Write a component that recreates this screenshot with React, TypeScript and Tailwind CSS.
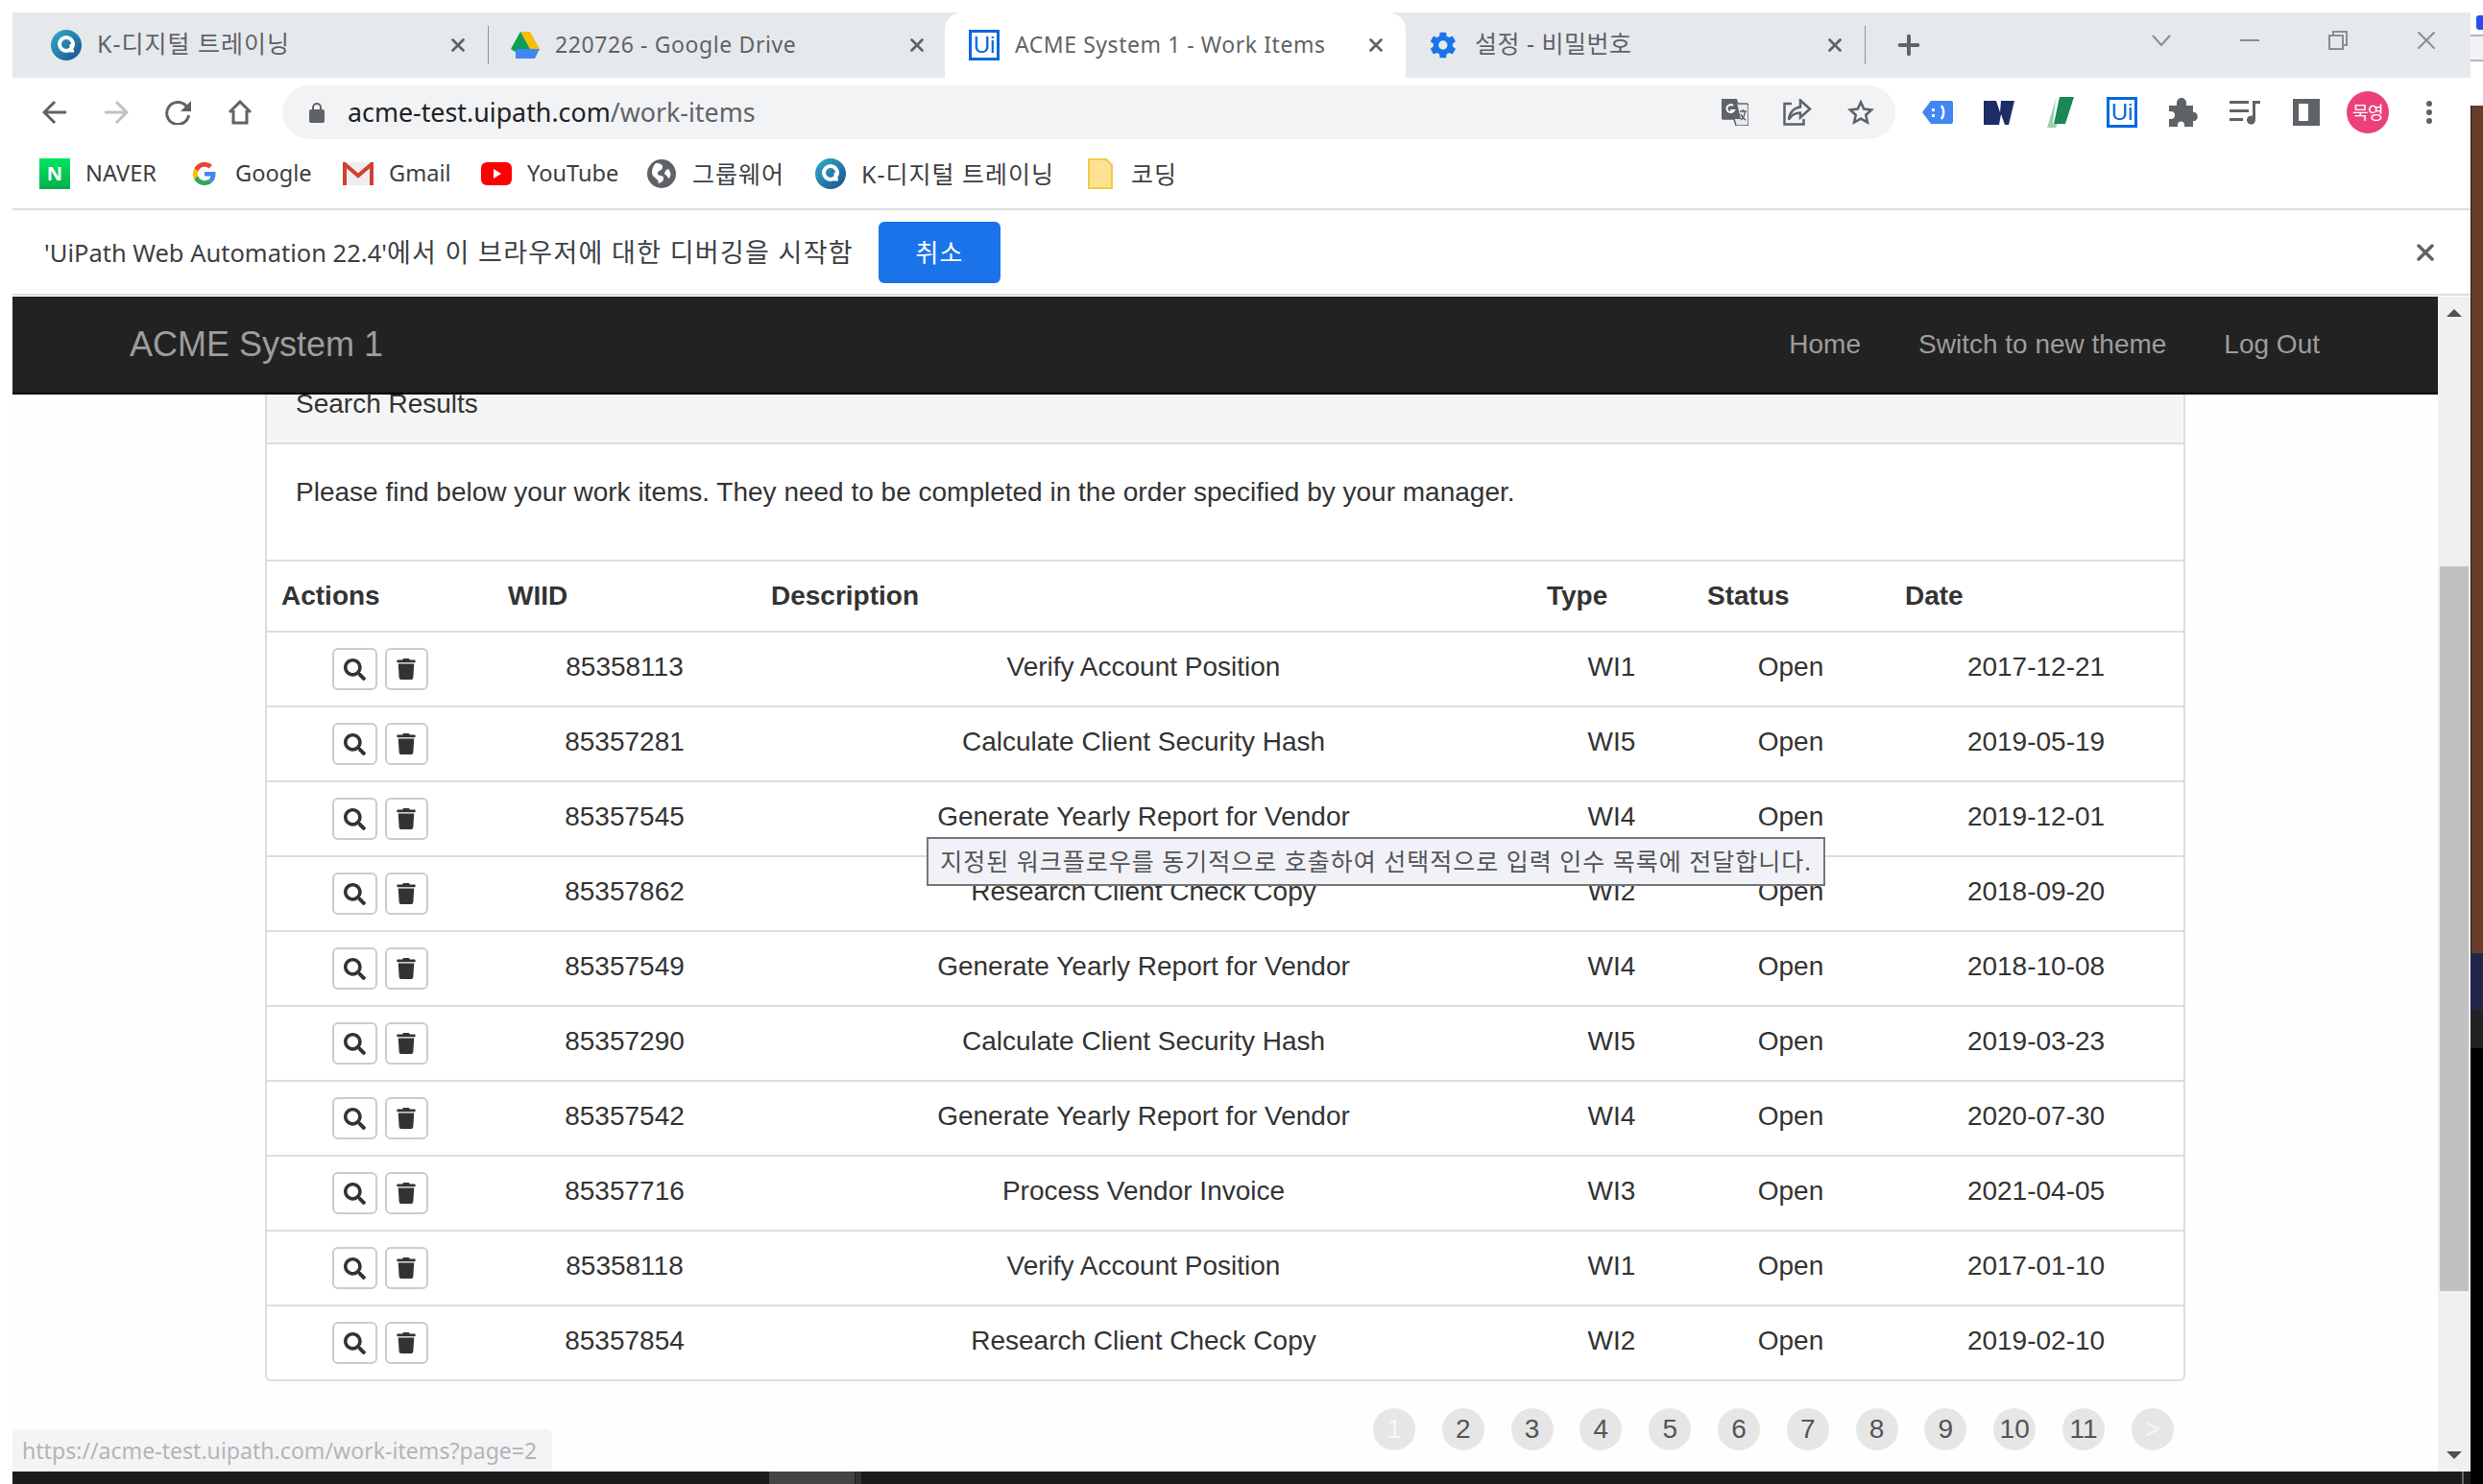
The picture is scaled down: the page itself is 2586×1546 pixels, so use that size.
import { FaSearch, FaTrash } from "react-icons/fa";
import { X, Plus } from "lucide-react";
import type { ReactNode } from "react";

const uiFont = "font-['Noto_Sans','Noto_Sans_CJK_KR',sans-serif]";

const rows = [
    ["85358113", "Verify Account Position", "WI1", "2017-12-21"],
    ["85357281", "Calculate Client Security Hash", "WI5", "2019-05-19"],
    ["85357545", "Generate Yearly Report for Vendor", "WI4", "2019-12-01"],
    ["85357862", "Research Client Check Copy", "WI2", "2018-09-20"],
    ["85357549", "Generate Yearly Report for Vendor", "WI4", "2018-10-08"],
    ["85357290", "Calculate Client Security Hash", "WI5", "2019-03-23"],
    ["85357542", "Generate Yearly Report for Vendor", "WI4", "2020-07-30"],
    ["85357716", "Process Vendor Invoice", "WI3", "2021-04-05"],
    ["85358118", "Verify Account Position", "WI1", "2017-01-10"],
    ["85357854", "Research Client Check Copy", "WI2", "2019-02-10"],
];

const gridCols = "grid grid-cols-[237px_274px_808px_167px_206px_305px]";

function AcademyIcon({ size = 32 }: { size?: number }) {
    return (
        <svg width={size} height={size} viewBox="0 0 32 32" className="shrink-0">
            <defs>
                <linearGradient id="acad" x1="0" y1="0" x2="1" y2="1">
                    <stop offset="0" stopColor="#2fb0c6" />
                    <stop offset="1" stopColor="#1a4f8f" />
                </linearGradient>
            </defs>
            <circle cx="16" cy="16" r="16" fill="url(#acad)" />
            <circle cx="16" cy="15" r="7" fill="none" stroke="#fff" strokeWidth="4" />
            <path d="M21 15v7h3" fill="none" stroke="#fff" strokeWidth="3" />
        </svg>
    );
}

function DriveIcon() {
    return (
        <svg width="30" height="28" viewBox="0 0 30 28" className="shrink-0">
            <path d="M10 0h10l10 18H20z" fill="#fbbc04" />
            <path d="M10 0l10 18-5 10L0 18z" fill="#0f9d58" />
            <path d="M5 18h25l-5 10H5z" fill="#4285f4" />
        </svg>
    );
}

function UiIcon({ size = 32 }: { size?: number }) {
    return (
        <div
            className="flex shrink-0 items-center justify-center border-[3px] border-[#0067df] bg-white font-['Liberation_Sans',sans-serif] text-[24px] font-normal leading-none text-[#0067df]"
            style={{ width: size, height: size }}
        >
            Ui
        </div>
    );
}

function GearIcon() {
    return (
        <svg width="26" height="28" viewBox="2.2 1.8 19.6 20.4" className="shrink-0" fill="#1a73e8">
            <path d="M19.4 13c.04-.33.06-.66.06-1s-.02-.67-.07-1l2.1-1.65a.5.5 0 0 0 .12-.64l-2-3.46a.5.5 0 0 0-.61-.22l-2.49 1a7.3 7.3 0 0 0-1.73-1l-.38-2.65A.5.5 0 0 0 13.9 2h-4a.5.5 0 0 0-.49.42L9.03 5.07a7.7 7.7 0 0 0-1.73 1l-2.49-1a.5.5 0 0 0-.61.22l-2 3.46a.5.5 0 0 0 .12.64L4.43 11c-.05.33-.08.67-.08 1s.03.67.07 1l-2.1 1.65a.5.5 0 0 0-.12.64l2 3.46c.13.22.39.3.61.22l2.49-1c.52.4 1.09.74 1.73 1l.38 2.65c.04.24.25.42.49.42h4c.24 0 .45-.18.49-.42l.38-2.65a7.7 7.7 0 0 0 1.73-1l2.49 1c.22.08.48 0 .61-.22l2-3.46a.5.5 0 0 0-.12-.64zM11.9 15.5a3.5 3.5 0 1 1 0-7 3.5 3.5 0 0 1 0 7z" />
        </svg>
    );
}

function Tab({
    icon,
    label,
    labelClass,
    width,
    pl,
    pr,
    active,
}: {
    icon: ReactNode;
    label: string;
    labelClass: string;
    width: string;
    pl: string;
    pr: string;
    active?: boolean;
}) {
    return (
        <div
            className={`flex h-full items-center justify-between ${width} ${pl} ${pr} ${active ? "rounded-t-[18px] bg-white" : ""}`}
        >
            <div className="flex items-center gap-[16px] whitespace-nowrap text-[#5f6368]">
                {icon}
                <span className={`-translate-y-[1px] ${labelClass}`}>{label}</span>
            </div>
            <X size={22} strokeWidth={3} className="text-[#5f6368]" />
        </div>
    );
}

function IconCell({ children }: { children: ReactNode }) {
    return <div className="flex h-full w-[64px] items-center justify-center">{children}</div>;
}

function Bookmark({ icon, label, width, korean }: { icon: ReactNode; label: string; width: string; korean?: boolean }) {
    return (
        <div className={`flex items-center gap-[16px] ${width}`}>
            <div className="flex w-[32px] shrink-0 justify-center">{icon}</div>
            <span className={`whitespace-nowrap leading-none text-[#3c4043] ${korean ? "text-[25px] tracking-[1px]" : "text-[23.600px]"}`}>
                {label}
            </span>
        </div>
    );
}

function TableRow({ row }: { row: string[] }) {
    return (
        <div className={`${gridCols} h-[78px] items-center border-t-2 border-[#ddd] text-center text-[#333]`}>
            <div className="flex justify-center gap-[8px] pl-[2px]">
                <div className="flex h-[44px] w-[47px] items-center justify-center rounded-[6px] border-2 border-[#ccc] bg-white">
                    <FaSearch size={23} className="text-[#333]" />
                </div>
                <div className="flex h-[44px] w-[45px] items-center justify-center rounded-[6px] border-2 border-[#ccc] bg-white">
                    <FaTrash size={22} className="text-[#333]" />
                </div>
            </div>
            <div className="pb-[4px] pl-[1px]">{row[0]}</div>
            <div className="pb-[4px]">{row[1]}</div>
            <div className="pb-[4px]">{row[2]}</div>
            <div className="pb-[4px]">Open</div>
            <div className="pb-[4px]">{row[3]}</div>
        </div>
    );
}

export default function App() {
    return (
        <div className={`flex h-[1546px] w-[2586px] overflow-hidden bg-white ${uiFont}`}>
            <div className="w-[13px] shrink-0" />

            <div className="flex w-[2560px] shrink-0 flex-col">
                <div className="h-[13px] shrink-0" />

                {/* Tab strip */}
                <div className="flex h-[68px] shrink-0 items-center bg-[#e6e9ec]">
                    <Tab icon={<AcademyIcon />} label="K-디지털 트레이닝" labelClass="text-[25px] tracking-[1px]" width="w-[495px]" pl="pl-[40px]" pr="pr-[20px]" />
                    <div className="h-[40px] w-px bg-[#8e9297]" />
                    <Tab icon={<DriveIcon />} label="220726 - Google Drive" labelClass="text-[23px] tracking-[0.6px]" width="w-[475px]" pl="pl-[23px]" pr="pr-[18px]" />
                    <Tab icon={<UiIcon />} label="ACME System 1 - Work Items" labelClass="text-[23px] tracking-[0.55px]" width="w-[480px]" pl="pl-[25px]" pr="pr-[20px]" active />
                    <Tab icon={<GearIcon />} label="설정 - 비밀번호" labelClass="ml-[4px] text-[25px] tracking-[0.5px]" width="w-[478px]" pl="pl-[26px]" pr="pr-[20px]" />
                    <div className="h-[40px] w-px bg-[#8e9297]" />
                    <div className="flex w-[90px] justify-center">
                        <Plus size={32} strokeWidth={3} className="text-[#5f6368]" />
                    </div>
                    <div className="ml-auto flex h-full items-start">
                        <div className="flex h-[58px] w-[92px] items-center justify-center">
                            <svg width="22" height="14" viewBox="0 0 22 14">
                                <path d="M2 2l9 10 9-10" fill="none" stroke="#8a8d91" strokeWidth="2" />
                            </svg>
                        </div>
                        <div className="flex h-[58px] w-[92px] items-center justify-center">
                            <div className="h-[2px] w-[20px] bg-[#8a8d91]" />
                        </div>
                        <div className="flex h-[58px] w-[92px] items-center justify-center">
                            <svg width="20" height="20" viewBox="0 0 20 20" fill="none" stroke="#8a8d91" strokeWidth="2">
                                <rect x="1" y="5" width="14" height="14" />
                                <path d="M5 5V1h14v14h-4" />
                            </svg>
                        </div>
                        <div className="flex h-[58px] w-[92px] items-center justify-center">
                            <X size={32} strokeWidth={1.5} className="text-[#8a8d91]" />
                        </div>
                    </div>
                </div>

                {/* Toolbar */}
                <div className="flex h-[79px] shrink-0 items-center pb-[7px]">
                    <div className="flex items-center gap-[38px] pl-[31px]">
                        <svg width="26" height="26" viewBox="0 0 26 26" fill="none" stroke="#5f6368" strokeWidth="3">
                            <path d="M25 13H3M13 2L2 13l11 11" />
                        </svg>
                        <svg width="26" height="26" viewBox="0 0 26 26" fill="none" stroke="#bdc1c6" strokeWidth="3">
                            <path d="M1 13h22M13 2l11 11-11 11" />
                        </svg>
                        <svg width="27" height="26" viewBox="0 0 27 26" fill="none">
                            <path d="M22 6.5A11.5 11.5 0 1 0 24.6 16" stroke="#5f6368" strokeWidth="3" />
                            <path d="M27 1v11H16z" fill="#5f6368" />
                        </svg>
                        <svg width="26" height="26" viewBox="0 0 26 26" fill="none" stroke="#5f6368" strokeWidth="3">
                            <path d="M2 13L13 2l11 11M6 11v13h14V11" />
                        </svg>
                    </div>
                    <div className="ml-[31px] flex h-[56px] w-[1680px] items-center rounded-full bg-[#f1f3f4] pl-[28px] pr-[21px]">
                        <svg width="16" height="21" viewBox="0 0 16 21" className="shrink-0">
                            <path d="M4 8V5a4 4 0 0 1 8 0v3" fill="none" stroke="#5f6368" strokeWidth="2" />
                            <rect y="7" width="16" height="14" rx="2" fill="#5f6368" />
                        </svg>
                        <div className="ml-[24px] whitespace-nowrap text-[26.8px] leading-none text-[#202124]">
                            acme-test.uipath.com<span className="text-[#5f6368]">/work-items</span>
                        </div>
                        <div className="ml-auto flex items-center gap-[36px]">
                            <svg width="28" height="28" viewBox="0 0 28 28">
                                <path d="M2 0h13l2 5h9a2 2 0 0 1 2 2v19a2 2 0 0 1-2 2H15l-2-7H2a2 2 0 0 1-2-2V2a2 2 0 0 1 2-2z" fill="#e8eaed" stroke="#5f6368" strokeWidth="1.5" />
                                <path d="M2 0h13l5 21H2a2 2 0 0 1-2-2V2a2 2 0 0 1 2-2z" fill="#5f6368" />
                                <path d="M12 7a4 4 0 1 0 1 5h-4" fill="none" stroke="#fff" strokeWidth="2" />
                                <path d="M19 13h7M22.500 11v2M20 22c3-2 4-5 4.500-9M20 16c1 3 3 5 5 6" fill="none" stroke="#5f6368" strokeWidth="1.500" />
                            </svg>
                            <svg width="30" height="28" viewBox="0 0 30 28" fill="none" stroke="#5f6368" strokeWidth="2.500">
                                <path d="M9 5H1.500v21.500h20V21" />
                                <path d="M18 1.500l10 9-10 9v-5c-5 0-9 2-12 7 .5-7 5-12 12-13z" />
                            </svg>
                            <svg width="30" height="28" viewBox="0 0 24 24" fill="none" stroke="#5f6368" strokeWidth="2.200">
                                <path d="M12 3l2.800 6.100 6.700.8-5 4.500 1.400 6.600L12 17.600 6.100 21l1.400-6.600-5-4.500 6.700-.8z" />
                            </svg>
                        </div>
                    </div>
                    <div className="ml-[12px] flex h-full items-center">
                        <IconCell>
                            <svg width="32" height="24" viewBox="0 0 32 24">
                                <path d="M9 0h21a2 2 0 0 1 2 2v20a2 2 0 0 1-2 2H9L0 12z" fill="#4285f4" />
                                <rect x="10" y="8" width="3" height="3" fill="#fff" />
                                <rect x="10" y="14" width="3" height="3" fill="#fff" />
                                <path d="M20 5c3 4 3 10 0 14" fill="none" stroke="#fff" strokeWidth="2.500" />
                            </svg>
                        </IconCell>
                        <IconCell>
                            <svg width="32" height="25" viewBox="0 0 32 25">
                                <path d="M0 0h32l-6 25H0z" fill="#1f2d66" />
                                <path d="M13 0h5l-1 12zM16 25l2-11 4 11z" fill="#fff" />
                            </svg>
                        </IconCell>
                        <IconCell>
                            <svg width="28" height="32" viewBox="0 0 28 32">
                                <path d="M13 0h15l-9 28H7z" fill="#1a8754" />
                                <path d="M9 2L0 32h9l2-4H6z" fill="#9bd0b4" />
                            </svg>
                        </IconCell>
                        <IconCell>
                            <UiIcon />
                        </IconCell>
                        <IconCell>
                            <svg width="30" height="30" viewBox="0 0 30 30">
                                <path d="M0 8h8V5a5 5 0 0 1 10 0v3h7v7h2a5 5 0 0 1 0 9h-2v6H16v-2a3 3 0 0 0-7 0v2H0v-8h2a4 4 0 0 0 0-8H0z" fill="#5f6368" />
                            </svg>
                        </IconCell>
                        <IconCell>
                            <svg width="32" height="26" viewBox="0 0 32 26" fill="#5f6368">
                                <rect y="1" width="20" height="3" />
                                <rect y="10" width="20" height="3" />
                                <rect y="19" width="14" height="3" />
                                <path d="M24 1h8v3h-5v17a4.500 4.500 0 1 1-3-4.200z" />
                            </svg>
                        </IconCell>
                        <IconCell>
                            <svg width="28" height="28" viewBox="0 0 28 28">
                                <path d="M0 0h28v28H0zM6 5v18h10V5z" fill="#5f6368" fillRule="evenodd" />
                            </svg>
                        </IconCell>
                        <IconCell>
                            <div className="flex h-[44px] w-[44px] items-center justify-center rounded-full bg-[#ec407a] text-[18px] leading-none tracking-[-0.5px] text-white">
                                묵영
                            </div>
                        </IconCell>
                        <IconCell>
                            <svg width="6" height="24" viewBox="0 0 6 24" fill="#5f6368">
                                <circle cx="3" cy="3" r="3" />
                                <circle cx="3" cy="12" r="3" />
                                <circle cx="3" cy="21" r="3" />
                            </svg>
                        </IconCell>
                    </div>
                </div>

                {/* Bookmarks */}
                <div className="flex h-[57px] shrink-0 items-center pb-[15px] pl-[28px]">
                    <Bookmark
                        width="w-[156px]"
                        label="NAVER"
                        icon={
                            <div className="flex h-[32px] w-[32px] items-center justify-center bg-gradient-to-b from-[#03e561] to-[#03b04c] text-[20px] font-bold leading-none text-white">
                                N
                            </div>
                        }
                    />
                    <Bookmark
                        width="w-[160px]"
                        label="Google"
                        icon={
                            <svg width="24" height="24" viewBox="0 0 48 48">
                                <path fill="#EA4335" d="M24 9.500c3.500 0 6.700 1.200 9.200 3.600l6.900-6.900C35.900 2.400 30.500 0 24 0 14.600 0 6.500 5.400 2.600 13.200l8 6.200C12.400 13.700 17.700 9.500 24 9.500z" />
                                <path fill="#4285F4" d="M47 24.500c0-1.600-.1-3.100-.4-4.500H24v9h13c-.6 3-2.300 5.500-4.800 7.200l7.700 6C44.400 38 47 31.800 47 24.500z" />
                                <path fill="#FBBC05" d="M10.500 28.600c-.5-1.400-.8-3-.8-4.600s.3-3.200.8-4.600l-8-6.200C.9 16.500 0 20.100 0 24s.9 7.500 2.600 10.800z" />
                                <path fill="#34A853" d="M24 48c6.500 0 11.900-2.100 15.900-5.800l-7.700-6c-2.200 1.500-4.900 2.300-8.200 2.300-6.300 0-11.600-4.200-13.500-9.900l-8 6.200C6.500 42.600 14.600 48 24 48z" />
                            </svg>
                        }
                    />
                    <Bookmark
                        width="w-[144px]"
                        label="Gmail"
                        icon={
                            <svg width="32" height="24" viewBox="0 0 32 24">
                                <rect width="32" height="24" fill="#eeeeee" />
                                <path d="M2 24V2l14 12L30 2v22" fill="none" stroke="#d23f31" strokeWidth="4" />
                            </svg>
                        }
                    />
                    <Bookmark
                        width="w-[172px]"
                        label="YouTube"
                        icon={
                            <svg width="32" height="24" viewBox="0 0 32 24">
                                <rect width="32" height="24" rx="6" fill="#ff0000" />
                                <path d="M13 7l8 5-8 5z" fill="#fff" />
                            </svg>
                        }
                    />
                    <Bookmark
                        width="w-[176px]"
                        label="그룹웨어"
                        korean
                        icon={
                            <svg width="30" height="30" viewBox="0 0 30 30">
                                <circle cx="15" cy="15" r="15" fill="#5f6368" />
                                <path d="M9 4c5 0 8 2 7 5s-6 3-5 6 5 1 6 4-3 6-6 6c3-3-3-5-5-8s-1-9 3-13zM22 10c3 3 3 7 1 10-2-1-2-3-4-4s0-5 3-6z" fill="#fff" />
                            </svg>
                        }
                    />
                    <Bookmark width="w-[281px]" label="K-디지털 트레이닝" korean icon={<AcademyIcon />} />
                    <Bookmark
                        width="w-[120px]"
                        label="코딩"
                        korean
                        icon={
                            <svg width="26" height="32" viewBox="0 0 26 32">
                                <path d="M1 1h18l6 6v24H1z" fill="#fde293" stroke="#f2c94c" strokeWidth="2" />
                            </svg>
                        }
                    />
                </div>
                <div className="h-[2px] shrink-0 bg-[#dcdcdc]" />

                {/* Debugger info bar */}
                <div className="flex h-[87px] shrink-0 items-center pl-[33px] pr-[33px]">
                    <span className="whitespace-nowrap text-[25.5px] leading-none text-[#3c4043]">
                        'UiPath Web Automation 22.4'
                        <span className="text-[27px] tracking-[1.3px]">에서 이 브라우저에 대한 디버깅을 시작함</span>
                    </span>
                    <div className="ml-[26px] flex h-[64px] w-[127px] items-center justify-center rounded-[6px] bg-[#1a73e8] text-[26px] leading-none tracking-[1px] text-white">
                        취소
                    </div>
                    <X size={28} strokeWidth={3} className="ml-auto text-[#5f6368]" />
                </div>
                <div className="h-[2px] shrink-0 bg-[#dcdcdc]" />
                <div className="h-px shrink-0" />

                {/* Page viewport */}
                <div className="flex min-h-0 flex-1">
                    <div className="relative w-[2526px] shrink-0 overflow-hidden bg-[#fefefe] font-['Liberation_Sans',sans-serif] text-[28px] text-[#333]">
                        <div className="flex h-[102px] items-center border-b-2 border-black bg-[#222] pl-[122px] pr-[123px] text-[#9d9d9d]">
                            <span className="text-[36px] leading-none">ACME System 1</span>
                            <div className="ml-auto flex gap-[60px] leading-none">
                                <span>Home</span>
                                <span>Switch to new theme</span>
                                <span>Log Out</span>
                            </div>
                        </div>

                        <div className="ml-[263px] w-[2000px] rounded-b-[6px] border-x-2 border-b-2 border-[#ddd] bg-white">
                            <div className="h-[52px] border-b-2 border-[#ddd] bg-[#f5f5f5] pl-[30px] leading-[20px]">
                                Search Results
                            </div>
                            <div className="h-[120px] pl-[30px] pt-[32px] leading-[36px]">
                                Please find below your work items. They need to be completed in the order specified by your manager.
                            </div>
                            <div className={`${gridCols} -mx-[2px] h-[74px] items-center border-t-2 border-[#ddd] font-bold`}>
                                <div className="pl-[17px]">Actions</div>
                                <div className="pl-[16px]">WIID</div>
                                <div className="pl-[16px]">Description</div>
                                <div className="pl-[16px]">Type</div>
                                <div className="pl-[16px]">Status</div>
                                <div className="pl-[16px]">Date</div>
                            </div>
                            <div className="-mx-[2px]">
                                {rows.map((row) => (
                                    <TableRow key={row[0]} row={row} />
                                ))}
                            </div>
                        </div>

                        {/* Pagination */}
                        <div className="ml-[1417px] mt-[28px] flex gap-[27.8px]">
                            {["1", "2", "3", "4", "5", "6", "7", "8", "9", "10", "11", ">"].map((page, i) => (
                                <div
                                    key={page}
                                    className={`flex h-[44px] w-[44px] items-center justify-center rounded-full bg-[#e6e6e6] leading-none ${i === 0 || i === 11 ? "text-[#f7f7f7]" : "text-[#555]"}`}
                                >
                                    {page}
                                </div>
                            ))}
                        </div>

                        {/* Link status bubble */}
                        <div className={`absolute bottom-0 left-0 flex h-[44px] w-[562px] items-center rounded-tr-[6px] bg-[#f3f4f6] pl-[10px] text-[23.1px] text-[#b5b5b5] ${uiFont}`}>
                            https://acme-test.uipath.com/work-items?page=2
                        </div>

                        {/* Hover tooltip */}
                        <div className={`absolute left-[952px] top-[563px] flex h-[51px] w-[936px] items-center justify-center border-2 border-[#767676] bg-[#f0f2f7] text-[25px] leading-none tracking-[1px] text-[#555] ${uiFont}`}>
                            지정된 워크플로우를 동기적으로 호출하여 선택적으로 입력 인수 목록에 전달합니다.
                        </div>
                    </div>

                    {/* Scrollbar */}
                    <div className="flex w-[34px] shrink-0 flex-col items-center bg-[#f0f0f0]">
                        <div className="mt-[13px] h-0 w-0 border-x-[8px] border-b-[8px] border-x-transparent border-b-[#505050]" />
                        <div className="mt-[260px] h-[755px] w-[30px] bg-[#c1c1c1]" />
                        <div className="mt-auto mb-[13px] h-0 w-0 border-x-[8px] border-t-[8px] border-x-transparent border-t-[#505050]" />
                    </div>
                </div>

                {/* Desktop behind the window */}
                <div className="flex h-[13px] shrink-0 items-stretch bg-[#1b1b1b] pl-[788px]">
                    <div className="w-[89px] bg-[#444]" />
                    <div className="ml-[1px] w-[6px] bg-[#333]" />
                    <div className="ml-auto mr-[7px] w-[2px] bg-[#666]" />
                </div>
            </div>

            {/* Strip of the next window and desktop */}
            <div className="flex w-[13px] shrink-0 flex-col bg-white">
                <div className="h-[16px]" />
                <div className="ml-[6px] h-[15px] rounded-l-[3px] bg-[#2c4cf0]" />
                <div className="mt-[5px] h-[28px] border-y-2 border-[#b5b5b5] bg-[#f0f2f5]" />
                <div className="h-[46px]" />
                <div className="h-[883px] border-l border-[#2a1a12] bg-[#673e2b]" />
                <div className="h-[59px] bg-[#20274a]" />
                <div className="h-[40px] bg-[#222]" />
                <div className="flex-1 bg-black" />
            </div>
        </div>
    );
}
